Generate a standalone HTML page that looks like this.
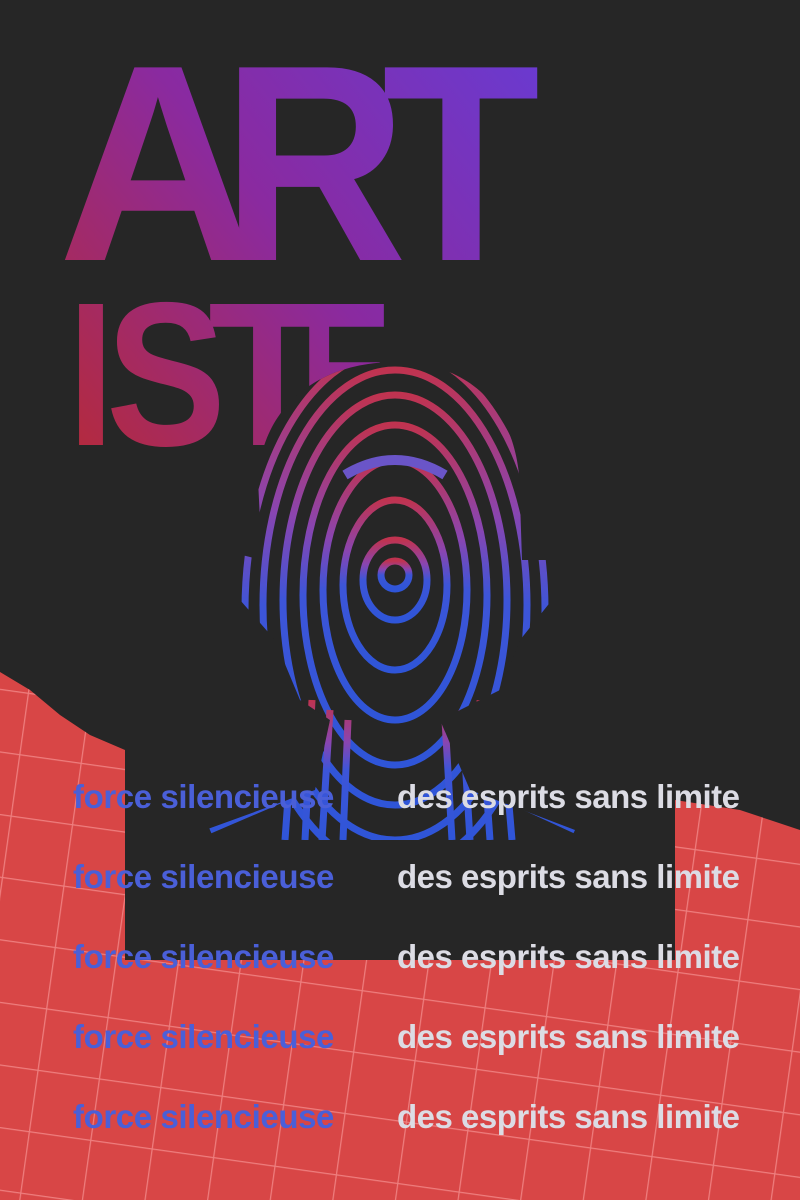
<!DOCTYPE html>
<html><head><meta charset="utf-8"><style>
html,body{margin:0;padding:0}
body{width:800px;height:1200px;background:#262626;position:relative;overflow:hidden;font-family:"Liberation Sans",sans-serif}
.row{position:absolute;font-weight:bold;font-size:33px;line-height:1}
.b{left:73px;color:#4a5fd8;letter-spacing:-0.4px}
.w{left:397px;color:#dcdce4;letter-spacing:-0.5px}
</style></head><body>
<svg width="800" height="1200" style="position:absolute;left:0;top:0">
<defs>
<linearGradient id="tg" gradientUnits="userSpaceOnUse" x1="60" y1="440" x2="540" y2="60">
<stop offset="0" stop-color="#b52a3c"/><stop offset="0.5" stop-color="#8a2aa0"/><stop offset="1" stop-color="#6a3ad0"/>
</linearGradient>
<linearGradient id="hg" x1="0" y1="0" x2="0" y2="1">
<stop offset="0" stop-color="#c03350"/><stop offset="0.3" stop-color="#8a45b0"/><stop offset="0.5" stop-color="#3d55d8"/><stop offset="1" stop-color="#2f55d8"/>
</linearGradient>
<pattern id="grid" width="62" height="62" patternUnits="userSpaceOnUse" patternTransform="rotate(8)">
<path d="M0 0H62M0 0V62" stroke="#f59090" stroke-width="2.5" fill="none"/>
</pattern>
<clipPath id="head">
<path d="M395 362C470 362 522 410 520 500L522 560 548 560 552 600 520 640 500 690 440 720 470 790 575 830 575 840 205 840 205 830 315 790 330 720 300 700 275 640 240 600 242 555 262 560 258 480C262 405 320 362 395 362Z"/>
</clipPath>
</defs>
<path d="M0 672L30 690 60 715 90 735 125 750 125 960 675 960 675 800 740 810 770 820 800 830V1200H0Z" fill="#d84646"/>
<path d="M0 672L30 690 60 715 90 735 125 750 125 960 675 960 675 800 740 810 770 820 800 830V1200H0Z" fill="url(#grid)" opacity="0.75"/>
<g font-family="Liberation Sans" font-weight="bold" fill="url(#tg)">
<text x="58" y="260" font-size="280" textLength="200" lengthAdjust="spacingAndGlyphs">A</text>
<text x="222" y="260" font-size="280" textLength="185" lengthAdjust="spacingAndGlyphs">R</text>
<text x="382" y="260" font-size="280" textLength="158" lengthAdjust="spacingAndGlyphs">T</text>
<text x="68" y="445" font-size="205" textLength="46" lengthAdjust="spacingAndGlyphs">I</text>
<text x="106" y="445" font-size="205" textLength="120" lengthAdjust="spacingAndGlyphs">S</text>
<text x="208" y="445" font-size="205" textLength="118" lengthAdjust="spacingAndGlyphs">T</text>
<text x="300" y="445" font-size="205" textLength="92" lengthAdjust="spacingAndGlyphs">E</text>
</g>
<g clip-path="url(#head)" fill="none" stroke="url(#hg)" stroke-width="7">
<rect x="200" y="360" width="380" height="480" fill="#262626" stroke="none"/>
<ellipse cx="395" cy="575" rx="14" ry="14"/>
<ellipse cx="395" cy="580" rx="32" ry="40"/>
<ellipse cx="395" cy="585" rx="52" ry="85"/>
<ellipse cx="395" cy="590" rx="72" ry="130"/>
<ellipse cx="395" cy="595" rx="92" ry="170"/>
<ellipse cx="395" cy="600" rx="112" ry="205"/>
<ellipse cx="395" cy="605" rx="132" ry="235"/>
<ellipse cx="395" cy="610" rx="150" ry="260"/>
<path d="M295 700L285 840M312 700L305 840M330 710L322 840M348 720L343 840M445 720L452 840M462 710L470 840M480 700L490 840M500 700L512 840M280 800L210 830M290 780L230 820M500 780L560 820M510 800L575 830"/>
</g>
<path d="M345 475Q395 445 445 475" stroke="#6a55c8" stroke-width="10" fill="none"/>
</svg>
<div class="row b" style="top:780px">force silencieuse</div><div class="row w" style="top:780px">des esprits sans limite</div>
<div class="row b" style="top:860px">force silencieuse</div><div class="row w" style="top:860px">des esprits sans limite</div>
<div class="row b" style="top:940px">force silencieuse</div><div class="row w" style="top:940px">des esprits sans limite</div>
<div class="row b" style="top:1020px">force silencieuse</div><div class="row w" style="top:1020px">des esprits sans limite</div>
<div class="row b" style="top:1100px">force silencieuse</div><div class="row w" style="top:1100px">des esprits sans limite</div>
</body></html>
